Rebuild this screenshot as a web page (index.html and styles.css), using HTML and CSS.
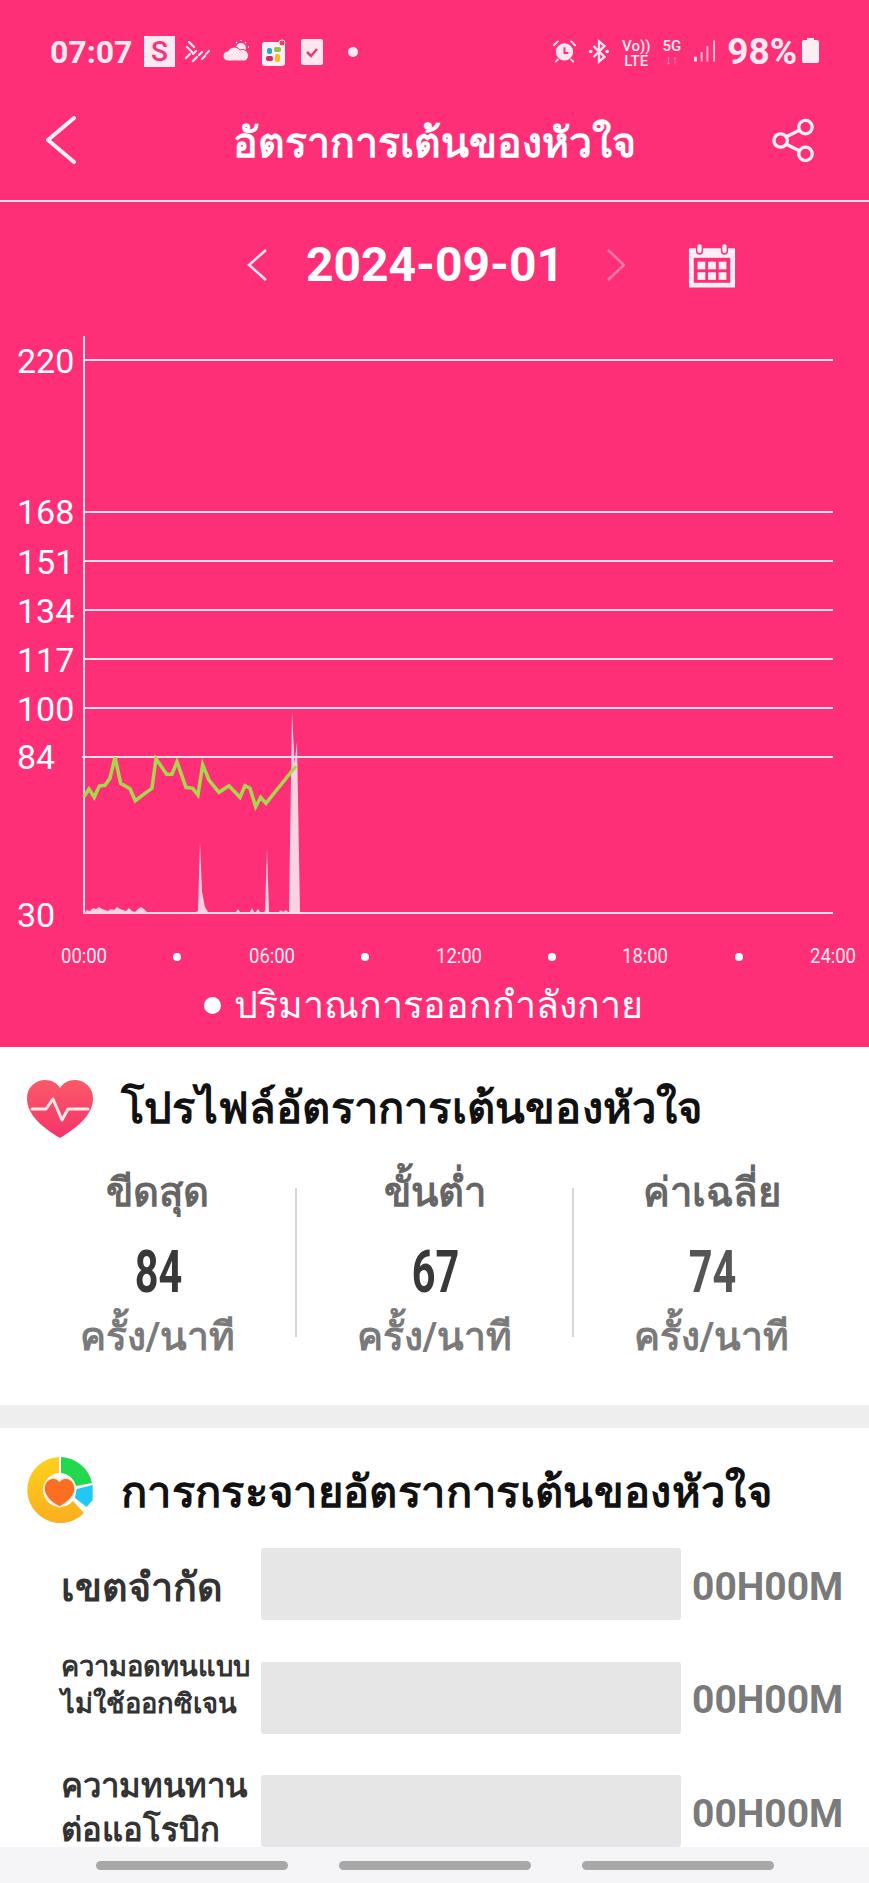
FILE: index.html
```html
<!DOCTYPE html>
<html lang="th">
<head>
<meta charset="utf-8">
<title>อัตราการเต้นของหัวใจ</title>
<link rel="stylesheet" href="styles.css">
</head>
<body>
<div class="screen">
  <section class="hero">
    <div class="status">
      <div class="status-left">
        <span class="time">07:07</span>
        <span class="s-badge">S</span>
        <svg class="si rain" width="25" height="22" viewBox="0 0 25 22"><path d="M4 1l5 5M2 6l5 5M1 17l4-4M8 13l3-3M8 20l4-4M14 14l3-3M17 18l3-3M21 13l3-3" fill="none" stroke="#fde6ee" stroke-width="2.200" stroke-linecap="round"/></svg>
        <svg class="si" width="28" height="24" viewBox="0 0 28 24"><circle cx="19" cy="9" r="5" fill="#fde6ee"/><path d="M19 1v1M26 8h1M24 3l-1 1M14 3l1 1" stroke="#fde6ee" stroke-width="1.500"/><path d="M6 22a5 5 0 0 1 0-10 7 7 0 0 1 12-1 5.500 5.500 0 0 1 5 11z" fill="#fde6ee" stroke="#ff2f77"/></svg>
        <svg class="si" width="24" height="27" viewBox="0 0 24 27"><rect x="0" y="3" width="23" height="24" rx="3" fill="#fdf0f5"/><circle cx="20" cy="4" r="3" fill="#f0454e" stroke="#fde6ee"/><rect x="5" y="9" width="5" height="6" rx="2" fill="#27a6c8"/><rect x="12" y="8" width="7" height="5" rx="2" fill="#8ec63f"/><rect x="4" y="17" width="7" height="5" rx="2" fill="#d8266a"/><rect x="13" y="15" width="5" height="8" rx="2" fill="#f4c020"/></svg>
        <svg class="si check" width="22" height="26" viewBox="0 0 22 26"><rect width="22" height="26" rx="2" fill="#fde6ee"/><path d="M6 13l4 4 6-7" fill="none" stroke="#e83a72" stroke-width="2.500"/></svg>
        <span class="dot"></span>
      </div>
      <div class="status-right">
        <svg class="si" width="23" height="24" viewBox="0 0 24 24"><circle cx="12" cy="13" r="9" fill="#fde6ee"/><path d="M12 8v6h4" fill="none" stroke="#ff2f77" stroke-width="2"/><path d="M1 6l4-4M23 6l-4-4M5 21l-2 2M19 21l2 2" stroke="#fde6ee" stroke-width="2" stroke-linecap="round"/></svg>
        <svg class="si" width="22" height="25" viewBox="0 0 24 26"><path d="M6 7l12 12-6 5V2l6 5L6 19" fill="none" stroke="#fde6ee" stroke-width="2.500"/><circle cx="3" cy="13" r="2" fill="#fde6ee"/><circle cx="21" cy="13" r="2" fill="#fde6ee"/></svg>
        <span class="net"><span>Vo))</span><span>LTE</span></span>
        <span class="net"><span>5G</span><span class="arrows">↓↑</span></span>
        <svg class="si" width="23" height="24" viewBox="0 0 24 24"><g fill="#fde6ee"><rect x="1" y="18" width="3" height="5"/><rect x="8" y="13" width="2" height="10" opacity=".8"/><rect x="14" y="7" width="2" height="16" opacity=".8"/><rect x="21" y="1" width="2" height="22" opacity=".8"/></g></svg>
        <span class="batt-pct">98%</span>
        <svg class="si batt" width="17" height="25" viewBox="0 0 17 25"><path d="M5 0h7v2h3a2 2 0 0 1 2 2v19a2 2 0 0 1-2 2H2a2 2 0 0 1-2-2V4a2 2 0 0 1 2-2h3z" fill="#fdeef3"/></svg>
      </div>
    </div>
    <header class="appbar">
      <svg class="back" width="32" height="48" viewBox="0 0 32 48"><path d="M29 2L3 24l26 22" fill="none" stroke="#fdf0f5" stroke-width="4" stroke-linecap="round" stroke-linejoin="round"/></svg>
      <h1 class="title">อัตราการเต้นของหัวใจ</h1>
      <svg class="share" width="44" height="45" viewBox="0 0 46 46"><g fill="none" stroke="#fdf0f5" stroke-width="3.500"><circle cx="35" cy="9" r="7"/><circle cx="35" cy="37" r="7"/><circle cx="9" cy="23" r="7"/><path d="M15 19l14-7M15 27l14 7"/></g></svg>
    </header>
    <div class="datebar">
      <svg class="chev" width="20" height="32" viewBox="0 0 20 32"><path d="M19 1L2 16l17 15" fill="none" stroke="#fdeaf0" stroke-width="2.500"/></svg>
      <span class="date">2024-09-01</span>
      <svg class="chev" width="18" height="32" viewBox="0 0 18 32"><path d="M1 1l16 15L1 31" fill="none" stroke="#ff7ba5" stroke-width="2.500"/></svg>
      <svg class="cal" width="48" height="45" viewBox="0 0 50 46"><path d="M1 5h48v41H1z" fill="#fdf0f5"/><rect x="9" y="0" width="6" height="11" rx="3" fill="#fdf0f5" stroke="#ff2f77" stroke-width="1.500"/><rect x="35" y="0" width="6" height="11" rx="3" fill="#fdf0f5" stroke="#ff2f77" stroke-width="1.500"/><rect x="6" y="15" width="38" height="26" fill="#ff2f77"/><g fill="#fdf0f5"><rect x="10" y="19" width="8" height="8"/><rect x="21" y="19" width="8" height="8"/><rect x="32" y="19" width="8" height="8"/><rect x="10" y="30" width="8" height="8"/><rect x="21" y="30" width="8" height="8"/><rect x="32" y="30" width="8" height="8"/></g></svg>
    </div>
    <svg class="chart" width="869" height="640" viewBox="0 0 869 640">
      <g class="grid">
        <path d="M84 1V579"/>
        <path d="M84 25H833M84 177H833M84 226H833M84 275H833M84 324H833M84 373H833M82 422H833M84 578H833"/>
      </g>
      <path class="activity" d="M84 578l3-3 3 1 3-3 3 1 3-2 3 2 3 1 3 1 3-2 3 1 3-3 3 2 3 1 3 1 3-3 3 3 3 1 3-3 3-2 3 2 3 3H196l2-1 2-69 2 50 3 15 3 5H236l2-3 2 3h10l2-4 2 4 2 0 2-3 2 3h4l1-1 2-62 2 63h10l2-2 2 2 3-2 2 2 1 0 3-201 2.500 53 2.500-22 3 170z"/>
      <path class="hr" d="M84 461.700L89 454 94.300 462.300 99.300 451 105 450.300 110 443.300 115 422.300 120.700 448.300 130 453.700 135.300 465.700 145 458.300 152 453.300 156 423.700 166.700 439.300 172 439.300 177 426.700 186 452.300 192.700 453.300 198 460 202.700 429.700 209 445 219 457.300 229 450.700 240 462.300 245 450.700 250 453.300 255.700 471.700 260.700 462.300 266 468.300 296 431"/>
      <g class="ylabels">
        <text x="17" y="38">220</text>
        <text x="17" y="189">168</text>
        <text x="17" y="239">151</text>
        <text x="17" y="288">134</text>
        <text x="17" y="337">117</text>
        <text x="17" y="386">100</text>
        <text x="17" y="434">84</text>
        <text x="17" y="592">30</text>
      </g>
      <g class="xlabels">
        <text x="84" y="628" textLength="46" lengthAdjust="spacingAndGlyphs">00:00</text>
        <text x="272" y="628" textLength="46" lengthAdjust="spacingAndGlyphs">06:00</text>
        <text x="459" y="628" textLength="46" lengthAdjust="spacingAndGlyphs">12:00</text>
        <text x="645" y="628" textLength="46" lengthAdjust="spacingAndGlyphs">18:00</text>
        <text x="833" y="628" textLength="46" lengthAdjust="spacingAndGlyphs">24:00</text>
      </g>
      <g class="xdots">
        <circle cx="177" cy="622" r="4"/>
        <circle cx="365" cy="622" r="4"/>
        <circle cx="552" cy="622" r="4"/>
        <circle cx="739" cy="622" r="4"/>
      </g>
    </svg>
    <div class="legend"><span class="legend-dot"></span><span>ปริมาณการออกกำลังกาย</span></div>
  </section>

  <section class="card card-profile">
    <div class="card-head">
      <svg class="card-icon" width="68" height="60" viewBox="0 0 68 60"><defs><linearGradient id="hg" x1="0" y1="0" x2="0" y2="1"><stop offset="0" stop-color="#fb5a68"/><stop offset="1" stop-color="#f5336a"/></linearGradient></defs><path d="M34 59C16 48 1 36 1 19 1 8 10 1 19 1c7 0 12 3 15 8 3-5 8-8 15-8 9 0 18 7 18 18 0 17-15 29-33 40z" fill="url(#hg)"/><path d="M6 30h14l7-10 9 21 6-11h20" fill="none" stroke="#fde8e8" stroke-width="3" stroke-linecap="round" stroke-linejoin="round"/></svg>
      <h2 class="card-title">โปรไฟล์อัตราการเต้นของหัวใจ</h2>
    </div>
    <div class="stats">
      <div class="stat"><div class="stat-label">ขีดสุด</div><div class="stat-num"><span>84</span></div><div class="stat-unit">ครั้ง/นาที</div></div>
      <div class="stat"><div class="stat-label">ขั้นต่ำ</div><div class="stat-num"><span>67</span></div><div class="stat-unit">ครั้ง/นาที</div></div>
      <div class="stat"><div class="stat-label">ค่าเฉลี่ย</div><div class="stat-num stat-num-soft"><span>74</span></div><div class="stat-unit">ครั้ง/นาที</div></div>
    </div>
  </section>

  <section class="card card-dist">
    <div class="card-head">
      <svg class="card-icon" width="68" height="68" viewBox="0 0 68 68"><defs><linearGradient id="yg" x1="0" y1="0" x2="0" y2="1"><stop offset="0" stop-color="#fdd21c"/><stop offset="1" stop-color="#fbae1e"/></linearGradient></defs><path d="M33 1A33 33 0 1 0 58 57L47 45A17 17 0 1 1 33 17z" fill="url(#yg)"/><path d="M35 1A33 33 0 0 1 66 27L50 30A17 17 0 0 0 35 17z" fill="#22d84f"/><path d="M50.700 33L66.700 29 66.700 44 60.700 51 49 42z" fill="#22c8f4"/><path d="M33.500 51C24 46 18 39 18 32c0-6 5-10 9-10 3 0 5 1 6.500 3 1.500-2 3.500-3 6.500-3 4 0 9 4 9 10 0 7-6 14-15.500 19z" fill="#fb6f22" stroke="#fde8dc" stroke-width="1.500"/></svg>
      <h2 class="card-title card-title-low">การกระจายอัตราการเต้นของหัวใจ</h2>
    </div>
    <div class="zones">
      <div class="zone"><div class="zone-label zone-label-lg">เขตจำกัด</div><div class="zone-bar"></div><div class="zone-time">00H00M</div></div>
      <div class="zone"><div class="zone-label zone-label-sm">ความอดทนแบบ<br>ไม่ใช้ออกซิเจน</div><div class="zone-bar"></div><div class="zone-time">00H00M</div></div>
      <div class="zone"><div class="zone-label zone-label-md">ความทนทาน<br>ต่อแอโรบิก</div><div class="zone-bar"></div><div class="zone-time">00H00M</div></div>
    </div>
  </section>

  <nav class="navbar"><span class="pill"></span><span class="pill"></span><span class="pill"></span></nav>
</div>
</body>
</html>
```
FILE: styles.css
```css
* { box-sizing: border-box; }
html, body { margin: 0; padding: 0; }
body { font-family: Roboto, "Noto Sans", "Liberation Sans", sans-serif; background: #fff; }
.screen { width: 869px; height: 1883px; overflow: hidden; display: flex; flex-direction: column; position: relative; background: #eeeeee; }

.hero { background: #ff2f77; height: 1047px; color: #fff; display: flex; flex-direction: column; flex: none; }
.status { height: 102px; padding: 36px 50px 0 50px; display: flex; justify-content: space-between; align-items: flex-start; color: #fdeaf0; }
.status-left, .status-right { display: flex; align-items: flex-start; gap: 12px; }
.time { font-size: 32px; font-weight: 700; line-height: 32px; width: 82px; }
.s-badge { width: 31px; height: 31px; background: #fdeaf0; color: #ff2f77; font-size: 28px; line-height: 31px; text-align: center; font-weight: 500; }
.si { flex: none; margin-top: 3px; }
.rain { margin-left: -2px; margin-top: 5px; }
.check { margin-left: 3px; }
.dot { width: 10px; height: 10px; border-radius: 50%; background: #fdeaf0; margin: 11px 0 0 13px; }
.net { display: flex; flex-direction: column; font-size: 15px; line-height: 15px; font-weight: 500; align-items: center; margin-top: 3px; }
.arrows { font-size: 13px; line-height: 12px; opacity: .55; }
.batt-pct { font-size: 37px; font-weight: 700; line-height: 32px; margin-left: -1px; }
.batt { margin-left: -7px; margin-top: 2px; }

.appbar { height: 100px; display: flex; align-items: center; justify-content: space-between; padding: 0 53px 22px 45px; border-bottom: 2px solid #fde0ea; flex: none; }
.title { margin: 0; padding: 6px 0 0 19px; font-size: 41px; font-weight: 700; line-height: 50px; flex: 1; text-align: center; white-space: nowrap; }

.datebar { height: 133px; display: flex; align-items: center; padding: 0 0 7px 247px; flex: none; }
.chev { flex: none; }
.date { font-size: 48px; font-weight: 700; width: 340px; padding-right: 4px; text-align: center; line-height: 56px; }
.cal { margin-left: 63px; flex: none; }

.chart { display: block; flex: none; }
.grid path { stroke: #fde0ea; stroke-width: 2; fill: none; }
.hr { fill: none; stroke: #a6d84a; stroke-width: 3.500; stroke-linejoin: miter; }
.activity { fill: #fad2e3; }
.ylabels text { font-size: 34px; fill: #fff; }
.xlabels text { font-size: 20px; fill: #fdeef3; text-anchor: middle; }
.xdots circle { fill: #fff; }

.legend { display: flex; align-items: center; justify-content: center; gap: 13px; height: 60px; font-size: 37.500px; padding-right: 22px; color: #fff; white-space: nowrap; flex: none; }
.legend-dot { width: 17px; height: 17px; border-radius: 50%; background: #fff; }

.card { background: #fff; flex: none; }
.card-profile { height: 358px; padding: 28px 26px 0; }
.card-dist { margin-top: 23px; padding: 28px 26px 0; flex: 1; }
.card-head { display: flex; align-items: center; gap: 27px; height: 68px; }
.card-icon { flex: none; }
.card-title { margin: 0; font-size: 43.500px; font-weight: 700; color: #111; line-height: 50px; white-space: nowrap; letter-spacing: .2px; }
.card-title-low { padding-top: 5px; letter-spacing: .35px; }

.stats { display: grid; grid-template-columns: 277px 277px 277px; margin: 25px -26px 0; padding-left: 19px; width: 869px; }
.stat { text-align: center; position: relative; }
.stat + .stat::before { content: ""; position: absolute; left: -1px; top: 20px; height: 149px; width: 2px; background: #d6d6d6; }
.stat-label { font-size: 40px; font-weight: 700; color: #666; line-height: 50px; white-space: nowrap; }
.stat-num { font-size: 60px; font-weight: 700; color: #383838; line-height: 70px; margin-top: 19px; padding-left: 2px; }
.stat-num span { display: inline-block; transform: scaleX(.69); }
.stat-num-soft { color: #555; }
.stat-unit { font-size: 39px; font-weight: 700; color: #7a7a7a; line-height: 50px; margin-top: 5px; white-space: nowrap; }

.zones { display: flex; flex-direction: column; gap: 41.500px; margin-top: 24px; padding-left: 35px; }
.zone { display: flex; align-items: center; height: 72px; }
.zone-label { width: 200px; font-weight: 700; color: #333; white-space: nowrap; flex: none; }
.zone-label-lg { font-size: 39.500px; line-height: 46px; margin-top: 7px; }
.zone-label-sm { font-size: 27.300px; line-height: 37px; margin-top: -24px; }
.zone-label-md { font-size: 32.800px; line-height: 44px; margin-top: -6px; }
.zone-bar { width: 420px; height: 72px; background: #e6e6e6; border-radius: 3px; flex: none; }
.zone-time { margin-left: 11px; font-size: 39px; font-weight: 700; color: #7a7a7a; white-space: nowrap; padding-top: 5px; }

.navbar { position: absolute; left: 0; right: 0; bottom: 0; height: 36px; background: #f5f5f7; display: flex; justify-content: center; gap: 51px; padding-top: 14px; }
.pill { width: 192px; height: 9px; border-radius: 5px; background: #a8a8a8; }
```
